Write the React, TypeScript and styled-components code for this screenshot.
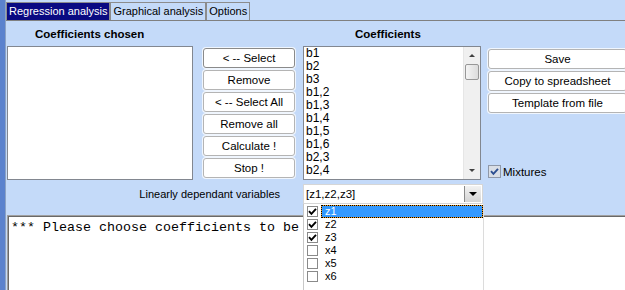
import React from 'react';
import styled, { createGlobalStyle } from 'styled-components';

const GlobalStyle = createGlobalStyle`
  html, body {
    margin: 0;
    padding: 0;
  }
  body {
    width: 625px;
    height: 290px;
    overflow: hidden;
    background: #c4daf9;
    font-family: "Liberation Sans", Arial, sans-serif;
    font-size: 11px;
    color: #000;
  }
`;

const Screen = styled.div`
  display: flex;
  width: 625px;
  height: 290px;
  overflow: hidden;
  background: #c4daf9;
`;

const SideStrip = styled.div`
  flex: none;
  width: 5px;
  background: #5b82cd;
`;

const Main = styled.div`
  flex: 1;
  min-width: 0;
  display: flex;
  flex-direction: column;
  border-left: 1px solid #8da3c4;
`;

const TabBar = styled.div`
  display: flex;
  align-items: flex-end;
  height: 20px;
  border-bottom: 1px solid #808080;
`;

const Tab = styled.div<{ $active?: boolean }>`
  height: 18px;
  box-sizing: border-box;
  padding: 0 2px;
  border: 1px solid #8c8c8c;
  border-bottom: none;
  line-height: 16px;
  font-size: 11px;
  white-space: nowrap;
  background: ${(p) => (p.$active ? '#0a0a82' : 'transparent')};
  color: ${(p) => (p.$active ? '#fff' : '#000')};
`;

const Panel = styled.div`
  flex: 1;
  display: flex;
  flex-direction: column;
  padding-left: 1px;
  min-height: 0;
`;

const Workspace = styled.div`
  display: grid;
  grid-template-columns: 196px 100px 185px 1fr;
  grid-template-rows: 25px 134px 24px;
  grid-template-areas:
    'chosenHead . coeffHead .'
    'chosen buttons coeffs side'
    'depend depend combo .';
`;

const Heading = styled.div<{ $indent: number; $area: string }>`
  grid-area: ${(p) => p.$area};
  align-self: center;
  padding-left: ${(p) => p.$indent}px;
  font-weight: bold;
  font-size: 11.5px;
  white-space: nowrap;
`;

const ListBox = styled.div<{ $width: number; $area: string }>`
  grid-area: ${(p) => p.$area};
  width: ${(p) => p.$width}px;
  height: 134px;
  box-sizing: border-box;
  border: 1px solid #828790;
  background: #fff;
  display: flex;
  overflow: hidden;
`;

const Items = styled.div`
  flex: 1;
  padding-left: 2px;
`;

const Item = styled.div`
  height: 13px;
  line-height: 13px;
  font-size: 12px;
`;

const ScrollBar = styled.div`
  flex: none;
  width: 17px;
  display: flex;
  flex-direction: column;
  align-items: center;
  background: #f0f0f0;
  border-left: 1px solid #e6e6e6;
  box-sizing: border-box;
`;

const ScrollArrow = styled.div<{ $down?: boolean }>`
  height: 17px;
  width: 100%;
  display: flex;
  align-items: center;
  justify-content: center;
  &::after {
    content: '';
    border-left: 3px solid transparent;
    border-right: 3px solid transparent;
    ${(p) =>
      p.$down ? 'border-top: 3px solid #404040;' : 'border-bottom: 3px solid #404040;'}
  }
`;

const Thumb = styled.div`
  width: 14px;
  height: 16px;
  box-sizing: border-box;
  border: 1px solid #979797;
  border-radius: 2px;
  background: linear-gradient(to right, #f4f4f4, #dcdcdc);
`;

const Track = styled.div`
  flex: 1;
`;

const ButtonStack = styled.div<{ $top: number; $area?: string }>`
  ${(p) => (p.$area ? `grid-area: ${p.$area};` : '')}
  display: flex;
  flex-direction: column;
  gap: 2px;
  padding-top: ${(p) => p.$top}px;
`;

const Button = styled.div<{ $default?: boolean; $width?: number }>`
  width: ${(p) => (p.$width ? `${p.$width}px` : 'auto')};
  height: 20px;
  box-sizing: border-box;
  border: 1px solid ${(p) => (p.$default ? '#8a8a8a' : '#b4b4b4')};
  border-radius: 3px;
  background: #fff;
  box-shadow: 0 0 0 1px rgba(255, 255, 255, 0.75);
  display: flex;
  align-items: center;
  justify-content: center;
  font-size: 11.5px;
  white-space: nowrap;
`;

const SideColumn = styled.div`
  grid-area: side;
  display: flex;
  flex-direction: column;
  justify-content: space-between;
  padding: 3px 0 2px;
  margin-right: -2px;
`;

const CheckRow = styled.label`
  display: flex;
  align-items: center;
  gap: 2px;
  font-size: 11.5px;
`;

const CheckBox = styled.span<{ $size: number; $muted?: boolean }>`
  width: ${(p) => p.$size}px;
  height: ${(p) => p.$size}px;
  box-sizing: border-box;
  border: 1px solid ${(p) => (p.$muted ? '#8f98a8' : '#8a8a8a')};
  background: ${(p) => (p.$muted ? '#d9dee6' : '#fff')};
  display: flex;
  align-items: center;
  justify-content: center;
  flex: none;
`;

const DependLabel = styled.div`
  grid-area: depend;
  align-self: end;
  height: 20px;
  line-height: 20px;
  text-align: right;
  padding-right: 23px;
  font-size: 11px;
`;

const Combo = styled.div`
  grid-area: combo;
  align-self: end;
  position: relative;
  width: 180px;
  height: 20px;
  box-sizing: border-box;
  border: 1px solid #d6d6d6;
  background: #fff;
  display: flex;
  align-items: center;
  padding-left: 2px;
  font-size: 11.5px;
`;

const ComboText = styled.span`
  flex: 1;
`;

const ComboButton = styled.div`
  width: 16px;
  height: 16px;
  margin-right: 1px;
  border-left: 1px solid #8a8a8a;
  background: linear-gradient(#f2f2f2, #d4d4d4);
  display: flex;
  align-items: center;
  justify-content: center;
  &::after {
    content: '';
    border-left: 4px solid transparent;
    border-right: 4px solid transparent;
    border-top: 4px solid #000;
  }
`;

const DropList = styled.div`
  position: absolute;
  top: 19px;
  left: -1px;
  width: 181px;
  height: 90px;
  box-sizing: border-box;
  background: #fff;
  border-left: 1px solid #c8c8c8;
  border-right: 1px solid #dcdcdc;
  padding: 1px 0 0 3px;
  z-index: 2;
`;

const DropItem = styled.div`
  display: flex;
  align-items: center;
  height: 13px;
  gap: 3px;
`;

const DropLabel = styled.span<{ $selected?: boolean }>`
  flex: 1;
  height: 13px;
  box-sizing: border-box;
  line-height: 11px;
  padding-left: 3px;
  font-size: 11px;
  color: ${(p) => (p.$selected ? '#fff' : '#000')};
  border: 1px solid transparent;
  ${(p) =>
    p.$selected
      ? `border: 1px dotted #000;
         background-color: #f09a1c;
         box-shadow: inset 0 0 0 20px #3399ff;`
      : ''}
`;

const Console = styled.div`
  flex: 1;
  margin-top: 11px;
  background: #fff;
  border-top: 1px solid #a0a0a0;
  border-left: 1px solid #a0a0a0;
  box-shadow: inset 1px 1px 0 #696969;
  padding: 4px 0 0 3px;
  font-family: "Liberation Mono", "Courier New", monospace;
  font-size: 13.33px;
  white-space: pre;
  overflow: hidden;
`;

const Check = ({ color = '#000' }: { color?: string }) => (
  <svg width="9" height="9" viewBox="0 0 9 9">
    <path d="M1 4.2 L3.4 6.8 L8 1.8" fill="none" stroke={color} strokeWidth="1.9" />
  </svg>
);

const coefficients = ['b1', 'b2', 'b3', 'b1,2', 'b1,3', 'b1,4', 'b1,5', 'b1,6', 'b2,3', 'b2,4'];

const variables = [
  { name: 'z1', checked: true },
  { name: 'z2', checked: true },
  { name: 'z3', checked: true },
  { name: 'x4', checked: false },
  { name: 'x5', checked: false },
  { name: 'x6', checked: false },
];

const App = () => {
  return (
    <Screen>
      <GlobalStyle />
      <SideStrip />
      <Main>
        <TabBar>
          <Tab $active>Regression analysis</Tab>
          <Tab>Graphical analysis</Tab>
          <Tab>Options</Tab>
        </TabBar>
        <Panel>
          <Workspace>
            <Heading $area="chosenHead" $indent={28}>
              Coefficients chosen
            </Heading>
            <Heading $area="coeffHead" $indent={52}>
              Coefficients
            </Heading>

            <ListBox $area="chosen" $width={186} />

            <ButtonStack $area="buttons" $top={2}>
              <Button $default $width={92}>&lt; -- Select</Button>
              <Button $width={92}>Remove</Button>
              <Button $width={92}>&lt; -- Select All</Button>
              <Button $width={92}>Remove all</Button>
              <Button $width={92}>Calculate !</Button>
              <Button $width={92}>Stop !</Button>
            </ButtonStack>

            <ListBox $area="coeffs" $width={178}>
              <Items>
                {coefficients.map((c) => (
                  <Item key={c}>{c}</Item>
                ))}
              </Items>
              <ScrollBar>
                <ScrollArrow />
                <Thumb />
                <Track />
                <ScrollArrow $down />
              </ScrollBar>
            </ListBox>

            <SideColumn>
              <ButtonStack $top={0}>
                <Button>Save</Button>
                <Button>Copy to spreadsheet</Button>
                <Button>Template from file</Button>
              </ButtonStack>
              <CheckRow>
                <CheckBox $size={13} $muted>
                  <Check color="#2d4f91" />
                </CheckBox>
                Mixtures
              </CheckRow>
            </SideColumn>

            <DependLabel>Linearly dependant variables</DependLabel>
            <Combo>
              <ComboText>[z1,z2,z3]</ComboText>
              <ComboButton />
              <DropList>
                {variables.map((v, i) => (
                  <DropItem key={v.name}>
                    <CheckBox $size={11}>{v.checked && <Check />}</CheckBox>
                    <DropLabel $selected={i === 0}>{v.name}</DropLabel>
                  </DropItem>
                ))}
              </DropList>
            </Combo>
          </Workspace>
          <Console>*** Please choose coefficients to be</Console>
        </Panel>
      </Main>
    </Screen>
  );
};

export default App;
